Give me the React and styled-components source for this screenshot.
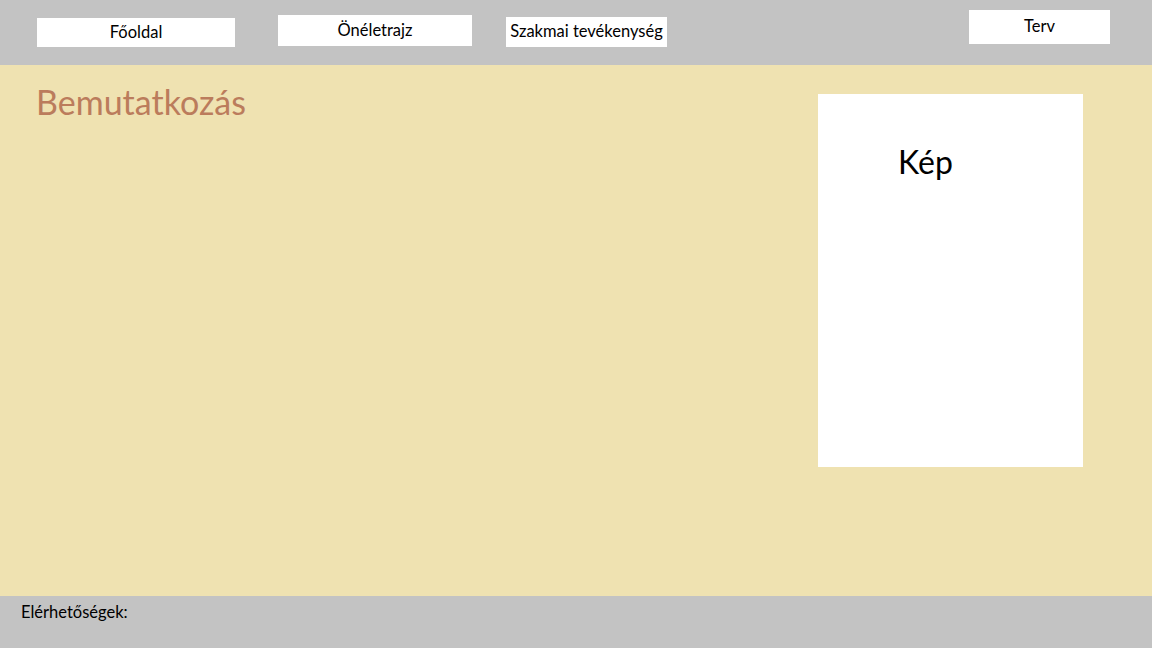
import React from "react"
import styled, { createGlobalStyle } from "styled-components"

const GlobalStyle = createGlobalStyle`
html, body {
  margin: 0;
  padding: 0;
}
body {
  font-family: Lato, "Open Sans", sans-serif;
  color: #000;
}
`

const Page = styled.div`
display: flex;
flex-direction: column;
width: 1152px;
height: 648px;
overflow: hidden;
`

const Header = styled.header`
display: flex;
align-items: flex-start;
height: 65px;
flex-shrink: 0;
background-color: #c3c3c3;
`

const NavButton = styled.div`
display: flex;
align-items: center;
justify-content: center;
box-sizing: border-box;
width: ${p => p.$w}px;
height: ${p => p.$h}px;
margin-top: ${p => p.$top}px;
margin-left: ${p => (p.$left === "auto" ? "auto" : p.$left + "px")};
margin-right: ${p => p.$right || 0}px;
padding-bottom: 2px;
background-color: #fff;
font-size: 16.5px;
white-space: nowrap;
`

const Main = styled.main`
flex: 1;
display: flex;
justify-content: space-between;
align-items: flex-start;
background-color: #efe2b1;
`

const Title = styled.h1`
margin: 19px 0 0 36px;
font-size: 34px;
font-weight: 400;
line-height: 36px;
color: #bb7c5c;
`

const PictureBox = styled.div`
width: 265px;
height: 373px;
margin: 29px 69px 0 0;
padding: 50px 0 0 80px;
box-sizing: border-box;
background-color: #fff;
font-size: 32px;
line-height: 36px;
`

const Footer = styled.footer`
height: 52px;
flex-shrink: 0;
box-sizing: border-box;
padding: 6px 0 0 21px;
background-color: #c3c3c3;
font-size: 16.5px;
line-height: 20px;
`

function App() {
  return (
    <Page>
      <GlobalStyle />
      <Header>
        <NavButton $w={198} $h={29} $top={18} $left={37}>Főoldal</NavButton>
        <NavButton $w={194} $h={31} $top={15} $left={43}>Önéletrajz</NavButton>
        <NavButton $w={161} $h={30} $top={17} $left={34}>Szakmai tevékenység</NavButton>
        <NavButton $w={141} $h={34} $top={10} $left="auto" $right={42}>Terv</NavButton>
      </Header>
      <Main>
        <Title>Bemutatkozás</Title>
        <PictureBox>Kép</PictureBox>
      </Main>
      <Footer>Elérhetőségek:</Footer>
    </Page>
  )
}

export default App
